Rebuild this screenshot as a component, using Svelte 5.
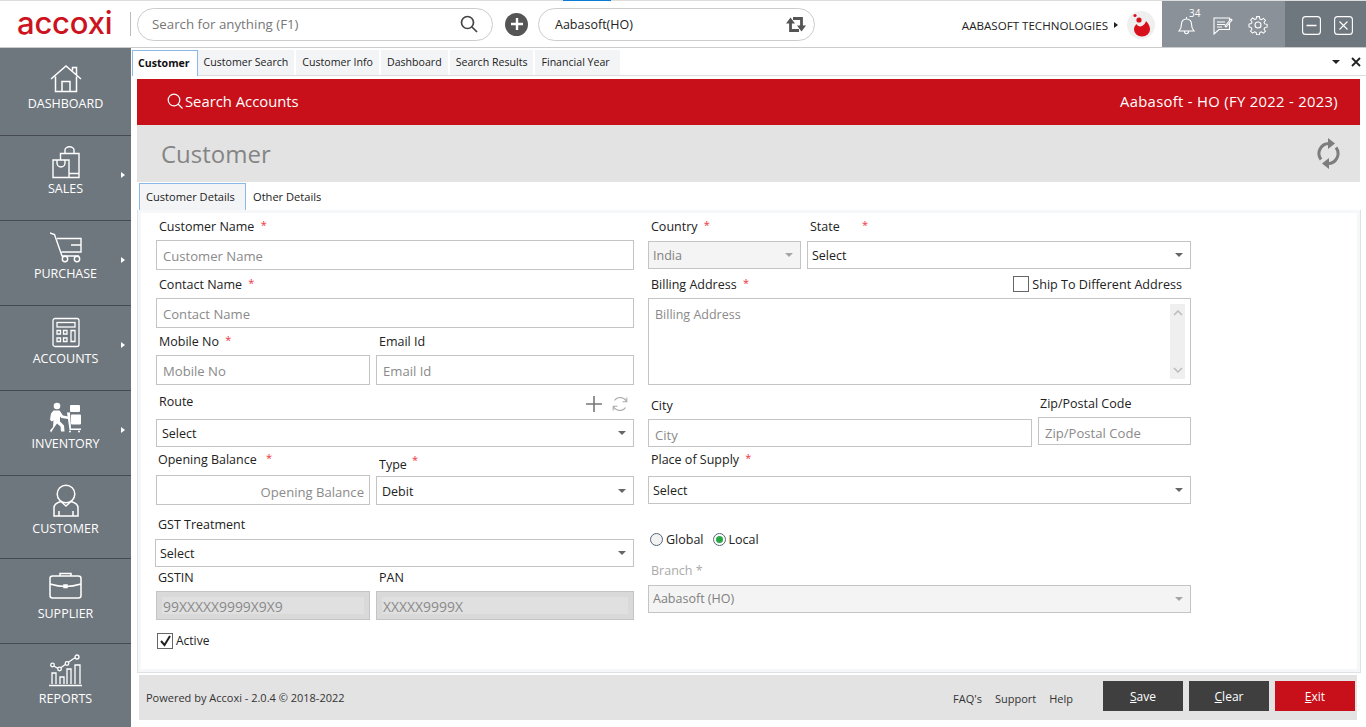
<script>
  const tabs = ['Customer', 'Customer Search', 'Customer Info', 'Dashboard', 'Search Results', 'Financial Year'];
</script>

<div class="app">
  <header class="topbar">
    <div class="logo">accoxi</div>
    <div class="search pill">
      <span>Search for anything (F1)</span>
      <svg width="18" height="18" viewBox="0 0 18 18" fill="none" stroke="#444" stroke-width="1.7"><circle cx="7.5" cy="7.5" r="6" /><path d="M12 12l5 5" /></svg>
    </div>
    <div class="add">
      <svg width="14" height="14" viewBox="0 0 14 14" stroke="#fff" stroke-width="2.4"><path d="M7 1v12M1 7h12" /></svg>
    </div>
    <div class="company pill">
      <span>Aabasoft(HO)</span>
      <svg width="20" height="17" viewBox="0 0 20 17" fill="none" stroke="#555" stroke-width="2.8"><path d="M4.500 6v8.500H13M7 2.500h8.500V11" /><path d="M0 7.500l4.500-6 4.500 6zM11 9.500l4.500 6 4.500-6z" fill="#555" stroke="none" /></svg>
    </div>
    <div class="org">
      <span>AABASOFT TECHNOLOGIES</span>
      <i class="org-caret"></i>
      <div class="avatar">
        <svg width="18" height="24" viewBox="0 0 18 24" fill="#d8101c">
          <circle cx="3" cy="2.5" r="1.6" />
          <circle cx="7" cy="7" r="2.6" />
          <path d="M14 8c3 3 4 6 4 8.500a8 7 0 0 1-16 0c0-2.500 1-4 2.500-5.500 1 2 3.500 3 5.500 2s3.500-3 4-5z" />
        </svg>
      </div>
    </div>
    <div class="tools">
      <div class="bell">
        <svg width="17" height="20" viewBox="0 0 17 20" fill="none" stroke="#fff" stroke-width="1.1"><path d="M1 16c2-2 2.500-4 2.500-7 0-3 2-5 5-5s5 2 5 5c0 3 .5 5 2.500 7zM6.500 16.500c0 3 4 3 4 0M8.500 4V2" /></svg>
        <small>34</small>
      </div>
      <svg class="chat" width="20" height="19" viewBox="0 0 20 19" fill="none" stroke="#fff" stroke-width="1.1"><path d="M1 2h15.500v11.500H6L1 18zM4 6h8M4 8.500h8M4 11h5" /><path d="M12 10l6-7 1 1-6 7z" fill="#8a9198" /></svg>
      <svg class="gear" width="20" height="20" viewBox="0 0 20 20" fill="none" stroke="#fff" stroke-width="1.1"><circle cx="10" cy="10" r="3" /><path d="M8.500 1h3l.5 2.600 1.700.7 2.200-1.500 2.100 2.100-1.500 2.200.7 1.700 2.600.5v3l-2.600.5-.7 1.700 1.500 2.200-2.100 2.100-2.200-1.500-1.700.7-.5 2.600h-3l-.5-2.600-1.700-.7-2.200 1.500-2.100-2.100 1.500-2.200-.7-1.700L.3 12V9l2.600-.5.7-1.700L2.100 4.600l2.100-2.100 2.200 1.500 1.700-.7z" transform="translate(.7 .7) scale(.93)" /></svg>
    </div>
    <div class="winbtns">
      <svg width="19" height="19" viewBox="0 0 19 19" fill="none" stroke="#fff" stroke-width="1.1"><rect x=".6" y=".6" width="17.800" height="17.800" rx="3" /><path d="M4.500 9.500h10" stroke-width="1.500" /></svg>
      <svg width="19" height="19" viewBox="0 0 19 19" fill="none" stroke="#fff" stroke-width="1.1"><rect x=".6" y=".6" width="17.800" height="17.800" rx="3" /><path d="M5.500 5.500l8 8M13.500 5.500l-8 8" /></svg>
    </div>
  </header>

  <div class="main">
    <nav class="sidebar">
      <a class="nav first">
        <svg width="32" height="28" viewBox="0 0 32 28" fill="none" stroke="#fff" stroke-width="1.5"><path d="M1 14.500L16 1.500l15 13M22.500 6V3h4v7.500M5.500 12v15h21V12M12 27V17h8v10" /></svg>
        <span>DASHBOARD</span>
      </a>
      <a class="nav more">
        <svg width="28" height="33" viewBox="0 0 28 33" fill="none" stroke="#fff" stroke-width="1.4"><path d="M8.500 14V7.500h18.500V31.500H17M13 7.500V4a4.500 3.200 0 0 1 9 0v3.500M17 27.500h10M1 14h16v17.500H1zM5 14v3a4 4 0 0 0 8 0v-3" /></svg>
        <span>SALES</span>
      </a>
      <a class="nav more">
        <svg width="32" height="31" viewBox="0 0 32 31" fill="none" stroke="#fff" stroke-width="1.4"><path d="M0 1l4.500 1.500L12 24h17M7 6.500h24V13H21M31 13v7H11.500" /><circle cx="15" cy="27" r="2.700" /><circle cx="27" cy="27" r="2.700" /></svg>
        <span>PURCHASE</span>
      </a>
      <a class="nav more">
        <svg width="28" height="30" viewBox="0 0 28 30" fill="none" stroke="#fff" stroke-width="1.3"><rect x="1" y="1" width="26" height="28" rx="2" /><rect x="5" y="5" width="18" height="4.500" /><path d="M5 13h3.500v3.500H5zM11.500 13H15v3.500h-3.500zM5 20.500h3.500V24H5zM11.500 20.500H15V24h-3.500zM19 13h4v11h-4z" /></svg>
        <span>ACCOUNTS</span>
      </a>
      <a class="nav more">
        <svg width="31" height="30" viewBox="0 0 31 30" fill="#fff"><circle cx="7" cy="3.500" r="3.300" /><path d="M3.500 8h6l3.500 5 5.500 1-.5 2.500-6.500-1-1.500-1.500v5l4 4 .5 6H11l-.5-5-3.500-3-2.500 3.500L1 30l-1-2 3-3.500.5-6.500-2 1L0 17l1-6z" /><path d="M17 10l3 0 1 16 10 0v1.600H19.500zM21 2.600h8a1 1 0 0 1 1 1v5a1 1 0 0 1-1 1h-8a1 1 0 0 1-1-1v-5a1 1 0 0 1 1-1zM22 12h8a1 1 0 0 1 1 1v8a1 1 0 0 1-1 1h-8a1 1 0 0 1-1-1v-8a1 1 0 0 1 1-1z" /><circle cx="20" cy="29" r="1" /><circle cx="29" cy="29" r="1" /></svg>
        <span>INVENTORY</span>
      </a>
      <a class="nav short">
        <svg width="26" height="33" viewBox="0 0 26 33" fill="none" stroke="#fff" stroke-width="1.5"><circle cx="13" cy="10" r="8.800" /><path d="M8 17.500c-4 1-7 2.500-7 6.500v8h24v-8c0-4-3-5.500-7-6.500l-5 4.500zM6 27v5M20 27v5" /></svg>
        <span>CUSTOMER</span>
      </a>
      <a class="nav tall">
        <svg width="33" height="27" viewBox="0 0 33 27" fill="none" stroke="#fff" stroke-width="1.5"><rect x="1" y="4" width="31" height="22" rx="2.500" /><path d="M11 4V1.500h11V4M1 12c5 1.500 10 2.500 15.500 2.500S27 13.500 32 12" /><path d="M15 13h3v2.500h-3z" fill="#fff" /></svg>
        <span>SUPPLIER</span>
      </a>
      <a class="nav tall last">
        <svg width="33" height="33" viewBox="0 0 33 33" fill="none" stroke="#fff" stroke-width="1.3"><path d="M0 31.500h33" stroke-width="1.600" /><path d="M3 30V19h4v11M11 30V23h4v7M18 30V15h4v15M26 30V11h5v19" /><path d="M3 11l7 4 7-5 7-5 6-3" /><circle cx="3.500" cy="11" r="1.800" fill="#6f777e" /><circle cx="10.500" cy="15" r="1.800" fill="#6f777e" /><circle cx="18" cy="9.500" r="1.800" fill="#6f777e" /><circle cx="28" cy="3" r="2" fill="#6f777e" /></svg>
        <span>REPORTS</span>
      </a>
    </nav>

    <section class="content">
      <div class="tabstrip">
        {#each tabs as tab, i}
          <div class="tab" class:active={i === 0}>{tab}</div>
        {/each}
        <div class="strip-tools">
          <i class="caret dark"></i>
          <svg width="10" height="10" viewBox="0 0 10 10" stroke="#222" stroke-width="1.8"><path d="M1 1l8 8M9 1l-8 8" /></svg>
        </div>
      </div>

      <div class="redbar">
        <div class="redsearch">
          <svg width="16" height="16" viewBox="0 0 16 16" fill="none" stroke="#fff" stroke-width="1.200"><circle cx="7" cy="7" r="5.800" /><path d="M11 11l4.500 4.500" /></svg>
          Search Accounts
        </div>
        <div class="fy">Aabasoft - HO (FY 2022 - 2023)</div>
      </div>

      <div class="titlebar">
        <h1>Customer</h1>
        <svg width="25" height="31" viewBox="0 0 25 31" fill="none" stroke="#7d7d7d" stroke-width="3"><path d="M13 5.500A10 10 0 0 0 5 21.500M12 25.500A10 10 0 0 0 20 9.500" /><path d="M12 0l7 5.500-7 5.500zM13 31l-7-5.500 7-5.500z" fill="#7d7d7d" stroke="none" /></svg>
      </div>

      <div class="subtabs">
        <div class="subtab active">Customer Details</div>
        <div class="subtab">Other Details</div>
      </div>

      <div class="panel">
        <div class="col left">
          <div class="lbl top ind1">Customer Name <b class="gap">*</b></div>
          <input class="inp" placeholder="Customer Name" />
          <div class="lbl h28 ind1">Contact Name <b class="gap">*</b></div>
          <input class="inp" placeholder="Contact Name" />

          <div class="row two r-mobile">
            <div class="cell">
              <div class="lbl h27 ind1">Mobile No <b class="gap-m">*</b></div>
              <input class="inp" placeholder="Mobile No" />
            </div>
            <div class="cell">
              <div class="lbl h27 ind1">Email Id</div>
              <input class="inp" placeholder="Email Id" />
            </div>
          </div>

          <div class="route-head">
            <div class="lbl ind1">Route</div>
            <div class="route-tools">
              <svg width="18" height="18" viewBox="0 0 18 18" stroke="#777" stroke-width="1.6"><path d="M9 1v16M1 9h16" /></svg>
              <svg width="16" height="16" viewBox="0 0 16 16" fill="none" stroke="#aaa" stroke-width="1.100"><path d="M14.500 5.500A7 7 0 0 0 2.500 4.500M1.500 10.500a7 7 0 0 0 12 1" /><path d="M14.800 1.500v4.300h-4.300M1.200 14.500v-4.300h4.300" /></svg>
            </div>
          </div>
          <div class="sel h28">Select<i class="caret"></i></div>

          <div class="row two r-open">
            <div class="cell">
              <div class="lbl h-open ind0">Opening Balance <b class="gap2">*</b></div>
              <input class="inp right" placeholder="Opening Balance" />
            </div>
            <div class="cell">
              <div class="lbl h-type ind1">Type <b class="sup">*</b></div>
              <div class="sel h29">Debit<i class="caret"></i></div>
            </div>
          </div>

          <div class="lbl gst ind0">GST Treatment</div>
          <div class="sel h28 wider">Select<i class="caret"></i></div>

          <div class="row two r-gstin">
            <div class="cell">
              <div class="lbl h24 ind0">GSTIN</div>
              <div class="ro"><span>99XXXXX9999X9X9</span></div>
            </div>
            <div class="cell">
              <div class="lbl h24 ind1">PAN</div>
              <div class="ro"><span>XXXXX9999X</span></div>
            </div>
          </div>

          <div class="check active-row">
            <span class="box">
              <svg width="13" height="12" viewBox="0 0 13 12" fill="none" stroke="#222" stroke-width="2"><path d="M2 6l3.500 4L11 1" /></svg>
            </span>
            Active
          </div>
        </div>

        <div class="col rightcol">
          <div class="row r-country">
            <div class="cell country">
              <div class="lbl h28r ind1">Country <b class="gap">*</b></div>
              <div class="sel h28 disabled">India<i class="caret"></i></div>
            </div>
            <div class="cell">
              <div class="lbl h28r ind1">State <b class="gap3">*</b></div>
              <div class="sel h28">Select<i class="caret"></i></div>
            </div>
          </div>

          <div class="billing-head">
            <div class="lbl ind1">Billing Address <b class="gap">*</b></div>
            <div class="check ship"><span class="box"></span>Ship To Different Address</div>
          </div>
          <div class="textarea">
            <span>Billing Address</span>
            <div class="scroll">
              <svg width="10" height="6" viewBox="0 0 10 6" fill="none" stroke="#bbb" stroke-width="1.500"><path d="M1 5l4-4 4 4" /></svg>
              <svg width="10" height="6" viewBox="0 0 10 6" fill="none" stroke="#bbb" stroke-width="1.500"><path d="M1 1l4 4 4-4" /></svg>
            </div>
          </div>

          <div class="row r-city">
            <div class="cell city">
              <div class="lbl h-city ind1">City</div>
              <input class="inp h28" placeholder="City" />
            </div>
            <div class="cell zip">
              <div class="lbl h-zip ind0">Zip/Postal Code</div>
              <input class="inp h28" placeholder="Zip/Postal Code" />
            </div>
          </div>

          <div class="lbl place ind1">Place of Supply <b class="gap">*</b></div>
          <div class="sel h28">Select<i class="caret"></i></div>

          <div class="radios">
            <span class="radio"></span>Global
            <span class="radio on"></span>Local
          </div>

          <div class="lbl branch ind1">Branch *</div>
          <div class="sel h28 disabled branch-sel">Aabasoft (HO)<i class="caret"></i></div>
        </div>
      </div>

      <footer class="footer">
        <div class="powered">Powered by Accoxi - 2.0.4 © 2018-2022</div>
        <div class="links">
          <span>FAQ's</span><span>Support</span><span>Help</span>
        </div>
        <div class="buttons">
          <button class="btn"><u>S</u>ave</button>
          <button class="btn"><u>C</u>lear</button>
          <button class="btn red"><u>E</u>xit</button>
        </div>
      </footer>
    </section>
  </div>
</div>

<style>
  :global(body) {
    margin: 0;
    background: #fff;
    font-family: "Open Sans", "Noto Sans", sans-serif;
    font-size: 12px;
    color: #222;
  }

  .app {
    width: 1366px;
    height: 727px;
    overflow: hidden;
    display: flex;
    flex-direction: column;
  }

  /* top bar */
  .topbar {
    height: 46px;
    flex: none;
    display: flex;
    align-items: center;
    border-top: 1px solid #ddd;
    border-bottom: 1px solid #ccc;
    position: relative;
    box-sizing: content-box;
  }

  .topbar::before {
    content: '';
    position: absolute;
    top: -1px;
    left: 563px;
    width: 48px;
    height: 1px;
    background: #0a7bd6;
  }

  .logo {
    width: 131px;
    height: 24px;
    border-right: 1px solid #bbb;
    box-sizing: border-box;
    padding-left: 17px;
    line-height: 22px;
    font-family: Inter, sans-serif;
    font-weight: 500;
    font-size: 31px;
    letter-spacing: -0.2px;
    color: #cc1420;
  }

  .pill {
    display: flex;
    align-items: center;
    justify-content: space-between;
    box-sizing: border-box;
    border: 1px solid #ccc;
    border-radius: 17px;
    height: 33px;
  }

  .search {
    width: 356px;
    margin-left: 6px;
    padding: 0 14px;
    font-size: 13.300px;
    color: #777;
  }

  .add {
    width: 23px;
    height: 23px;
    margin-left: 12px;
    border-radius: 50%;
    background: #555;
    display: grid;
    place-items: center;
  }

  .company {
    width: 277px;
    margin-left: 10px;
    padding: 0 8px 0 16px;
    font-size: 12.500px;
    color: #222;
  }

  .org {
    display: flex;
    align-items: center;
    margin-left: auto;
    padding-top: 2px;
    font-size: 11.600px;
    color: #222;
  }

  .org-caret {
    width: 0;
    height: 0;
    margin: 0 9px 0 6px;
    border-left: 4px solid #222;
    border-top: 3.500px solid transparent;
    border-bottom: 3.500px solid transparent;
  }

  .avatar {
    width: 28px;
    height: 28px;
    margin-right: 7px;
    border-radius: 50%;
    background: #efefef;
    display: grid;
    place-items: center;
  }

  .tools {
    width: 123px;
    height: 46px;
    box-sizing: border-box;
    background: #8a9198;
    display: flex;
    align-items: center;
    padding: 2px 0 0 16px;
  }

  .chat {
    margin-left: 18px;
  }

  .gear {
    margin-left: 15px;
  }

  .bell {
    position: relative;
    height: 20px;
  }

  .bell small {
    position: absolute;
    top: -9px;
    left: 11px;
    font-size: 10px;
    color: #fff;
  }

  .winbtns {
    width: 81px;
    height: 46px;
    box-sizing: border-box;
    background: #6f777e;
    display: flex;
    align-items: center;
    gap: 13px;
    padding: 2px 0 0 17px;
  }

  /* layout */
  .main {
    flex: 1;
    min-height: 0;
    display: flex;
  }

  .sidebar {
    width: 131px;
    flex: none;
    background: #6f777e;
    color: #fff;
  }

  .nav {
    height: 85px;
    box-sizing: border-box;
    display: flex;
    flex-direction: column;
    align-items: center;
    padding-top: 10px;
    border-bottom: 1px solid #454b50;
    position: relative;
    font-size: 12.500px;
  }

  .nav svg {
    height: 33px;
    margin-bottom: 1px;
  }

  .nav span {
    line-height: 18px;
  }

  .nav.first {
    height: 88px;
    padding-top: 14px;
  }

  .nav.first svg {
    margin-bottom: 0;
  }

  .nav.short {
    height: 83px;
    padding-top: 8px;
  }

  .nav.short svg {
    margin-bottom: 3px;
  }

  .nav.tall {
    padding-top: 10px;
  }

  .nav.tall svg {
    margin-bottom: 3px;
  }

  .nav.last {
    border-bottom: 0;
  }

  .nav.more::after {
    content: '';
    position: absolute;
    right: 6px;
    top: 36px;
    border-left: 4px solid #fff;
    border-top: 3.500px solid transparent;
    border-bottom: 3.500px solid transparent;
  }

  .content {
    flex: 1;
    min-width: 0;
    display: flex;
    flex-direction: column;
    padding-left: 1px;
  }

  /* tab strip */
  .tabstrip {
    height: 27px;
    flex: none;
    display: flex;
    align-items: flex-end;
    border-bottom: 1px solid #ddd;
    position: relative;
  }

  .tab {
    height: 25px;
    line-height: 25px;
    padding: 0 6px;
    margin-right: 2px;
    background: #f3f4f6;
    font-size: 10.600px;
    color: #222;
  }

  .tab:nth-child(6) {
    padding-right: 10px;
  }

  .tab.active {
    margin-bottom: -1px;
    margin-right: 0;
    box-sizing: border-box;
    height: 26px;
    line-height: 24px;
    background: #fff;
    border: 1px solid #8ab8e8;
    border-bottom: 0;
    padding: 0 7px 0 5px;
    font-weight: 700;
    color: #111;
  }

  .strip-tools {
    margin-left: auto;
    align-self: center;
    display: flex;
    align-items: center;
    gap: 11px;
    padding-right: 5px;
  }

  .caret {
    position: absolute;
    right: 7px;
    top: 50%;
    margin-top: -2px;
    border-top: 4px solid #666;
    border-left: 4px solid transparent;
    border-right: 4px solid transparent;
  }

  .caret.dark {
    position: static;
    margin: 0;
    border-top-color: #222;
  }

  /* red bar and title */
  .redbar {
    height: 46px;
    box-sizing: border-box;
    flex: none;
    margin: 3px 6px 0 5px;
    padding: 0 22px 2px 30px;
    display: flex;
    align-items: center;
    justify-content: space-between;
    background: #c8101a;
    color: #fff;
    font-size: 14.800px;
  }

  .fy {
    letter-spacing: 0.32px;
  }

  .redsearch {
    display: flex;
    align-items: center;
    gap: 2px;
  }

  .titlebar {
    height: 57px;
    flex: none;
    margin: 0 6px 0 5px;
    padding: 0 19px 0 24px;
    display: flex;
    align-items: center;
    justify-content: space-between;
    background: #e3e3e3;
  }

  h1 {
    margin: 0;
    font-size: 24px;
    font-weight: 400;
    color: #858585;
  }

  /* sub tabs */
  .subtabs {
    height: 27px;
    flex: none;
    display: flex;
    margin: 1px 6px 0 7px;
    align-items: stretch;
  }

  .subtab {
    padding: 0 7px;
    line-height: 27px;
    font-size: 11.100px;
    color: #222;
  }

  .subtab.active {
    box-sizing: border-box;
    width: 107px;
    border: 1px solid #8ab8e8;
    border-bottom: 0;
    background: #f3f4f6;
    padding: 0 6px;
    line-height: 26px;
  }

  /* form */
  .panel {
    height: 463px;
    flex: none;
    box-sizing: border-box;
    margin: 0 5px 0 5px;
    border: 1px solid #dfe2e5;
    border-top: 0;
    box-shadow: inset 3px 3px 0 #f5f7f9, inset -3px -3px 0 #f5f7f9;
    display: flex;
    gap: 14px;
    padding: 3px 0 0 18px;
    background: #fff;
  }

  .col.left {
    width: 478px;
  }

  .col.rightcol {
    width: 543px;
  }

  .lbl {
    font-size: 12.500px;
    color: #222;
    line-height: 20px;
  }

  .lbl b {
    font-weight: 400;
    font-size: 11px;
    color: #ef3340;
    position: relative;
    top: -2px;
  }

  .gap { margin-left: 3px; }
  .gap2 { margin-left: 6px; }
  .gap3 { margin-left: 19px; }
  .gap-m { margin-left: 3px; }
  .lbl .sup { top: -5px; margin-left: 2px; }

  .ind0 { padding-left: 2px; }
  .ind1 { padding-left: 3px; }

  .h24 { height: 24px; padding-top: 1px; box-sizing: border-box; }
  .h27 { height: 26px; padding-top: 3px; box-sizing: border-box; }
  .top { height: 27px; padding-top: 4px; box-sizing: border-box; }
  .h28r { height: 28px; padding-top: 4px; box-sizing: border-box; }
  .h28.lbl { height: 28px; padding-top: 5px; box-sizing: border-box; }

  .inp {
    display: block;
    width: 100%;
    height: 30px;
    box-sizing: border-box;
    border: 1px solid #c4c4c4;
    border-radius: 0;
    padding: 2px 6px 0;
    margin: 0;
    outline: none;
    background: #fff;
    font: 13.100px "Open Sans", "Noto Sans", sans-serif;
    color: #222;
  }

  .inp::placeholder {
    color: #8a8a8a;
    opacity: 1;
  }

  .inp.right { text-align: right; padding: 3px 5px 0; }
  .inp.h28 { height: 28px; padding-top: 4px; }

  .sel {
    position: relative;
    box-sizing: border-box;
    height: 28px;
    line-height: 28px;
    padding: 0 4px;
    border: 1px solid #c4c4c4;
    background: #fff;
    font-size: 12.500px;
    color: #222;
  }

  .left .sel { padding-left: 5px; }

  .sel.h29 { height: 29px; line-height: 29px; }

  .sel.wider {
    margin-left: -1px;
    padding-left: 4px;
  }

  .sel.disabled {
    background: #f4f4f4;
    color: #808080;
  }

  .sel.branch-sel {
    line-height: 26px;
  }

  .sel.disabled .caret {
    border-top-color: #a5a5a5;
  }

  .row {
    display: flex;
    gap: 6px;
  }

  .row.two .cell {
    flex: none;
    width: 214px;
  }

  .row.two .cell + .cell {
    width: 258px;
  }

  .r-mobile { margin-top: 1px; }

  .route-head {
    height: 34px;
    display: flex;
    justify-content: space-between;
    align-items: flex-end;
    padding-bottom: 5px;
    box-sizing: border-box;
  }

  .route-head .lbl {
    margin-bottom: 2px;
  }

  .route-tools {
    display: flex;
    align-items: center;
    gap: 9px;
    padding-right: 6px;
    margin-bottom: 1px;
  }

  .h-open { height: 28px; padding-top: 3px; box-sizing: border-box; }
  .h-type { height: 29px; padding-top: 8px; box-sizing: border-box; }

  .gst {
    margin-top: 10px;
    height: 24px;
  }

  .ro {
    height: 29px;
    box-sizing: border-box;
    padding: 5px;
    border: 1px solid #c4c4c4;
    background: #d9d9d9;
  }

  .ro span {
    display: block;
    height: 17px;
    line-height: 19px;
    padding-left: 1px;
    background: #e0e0e0;
    font-size: 13.900px;
    color: #8a8a8a;
  }

  .check {
    display: flex;
    align-items: center;
    font-size: 12px;
    color: #222;
  }

  .box {
    width: 16px;
    height: 16px;
    box-sizing: border-box;
    border: 1px solid #666;
    margin-right: 3px;
    display: grid;
    place-items: center;
    background: #fff;
  }

  .active-row {
    margin: 12px 0 0 1px;
  }

  /* right column */
  .country {
    flex: none;
    width: 153px;
  }

  .r-country .cell + .cell {
    flex: 1;
  }

  .billing-head {
    height: 29px;
    display: flex;
    justify-content: space-between;
    align-items: center;
  }

  .billing-head .lbl {
    padding-top: 2px;
  }

  .ship {
    padding: 0 9px 0 0;
    margin-top: 1px;
    font-size: 12.600px;
  }

  .textarea {
    position: relative;
    height: 87px;
    box-sizing: border-box;
    border: 1px solid #c4c4c4;
    padding: 7px 6px;
    font-size: 12.500px;
    color: #8a8a8a;
  }

  .scroll {
    position: absolute;
    top: 5px;
    right: 5px;
    bottom: 5px;
    width: 15px;
    background: #efefef;
    display: flex;
    flex-direction: column;
    justify-content: space-between;
    align-items: center;
    padding: 6px 0;
    box-sizing: border-box;
  }

  .r-city {
    align-items: flex-end;
  }

  .city {
    flex: none;
    width: 384px;
  }

  .zip {
    flex: 1;
    margin-bottom: 2px;
  }

  .h-city { height: 34px; padding-top: 11px; box-sizing: border-box; }
  .h-zip { height: 23px; }

  .place {
    height: 29px;
    padding: 3px 0 0 3px;
    box-sizing: border-box;
  }

  .radios {
    display: flex;
    align-items: center;
    margin-top: 25px;
    height: 20px;
    font-size: 12.500px;
    color: #222;
  }

  .radio {
    width: 13px;
    height: 13px;
    box-sizing: border-box;
    border: 1px solid #567;
    border-radius: 50%;
    margin: 0 3px 0 2px;
    background: #f2f2f2;
  }

  .radio.on {
    margin-left: 9px;
    background: #fff;
    position: relative;
  }

  .radio.on::after {
    content: '';
    position: absolute;
    inset: 2px;
    border-radius: 50%;
    background: #28a745;
  }

  .branch {
    color: #aaa;
    height: 36px;
    padding-top: 12px;
    box-sizing: border-box;
  }

  /* footer */
  .footer {
    height: 45px;
    flex: none;
    margin: 2px 9px 0 7px;
    padding: 0 2px 0 7px;
    display: flex;
    align-items: center;
    background: #e3e3e3;
    font-size: 11px;
    color: #333;
  }

  .links {
    margin-left: auto;
    display: flex;
    gap: 13px;
    padding-top: 2px;
    transform: translateX(1px);
  }

  .buttons {
    display: flex;
    gap: 6px;
    margin-left: 31px;
    margin-top: -3px;
  }

  .btn {
    width: 80px;
    height: 30px;
    padding: 0;
    border: 0;
    background: #3f3f3f;
    color: #fff;
    font: 12px "Open Sans", "Noto Sans", sans-serif;
  }

  .btn.red {
    background: #c8101a;
  }
</style>
